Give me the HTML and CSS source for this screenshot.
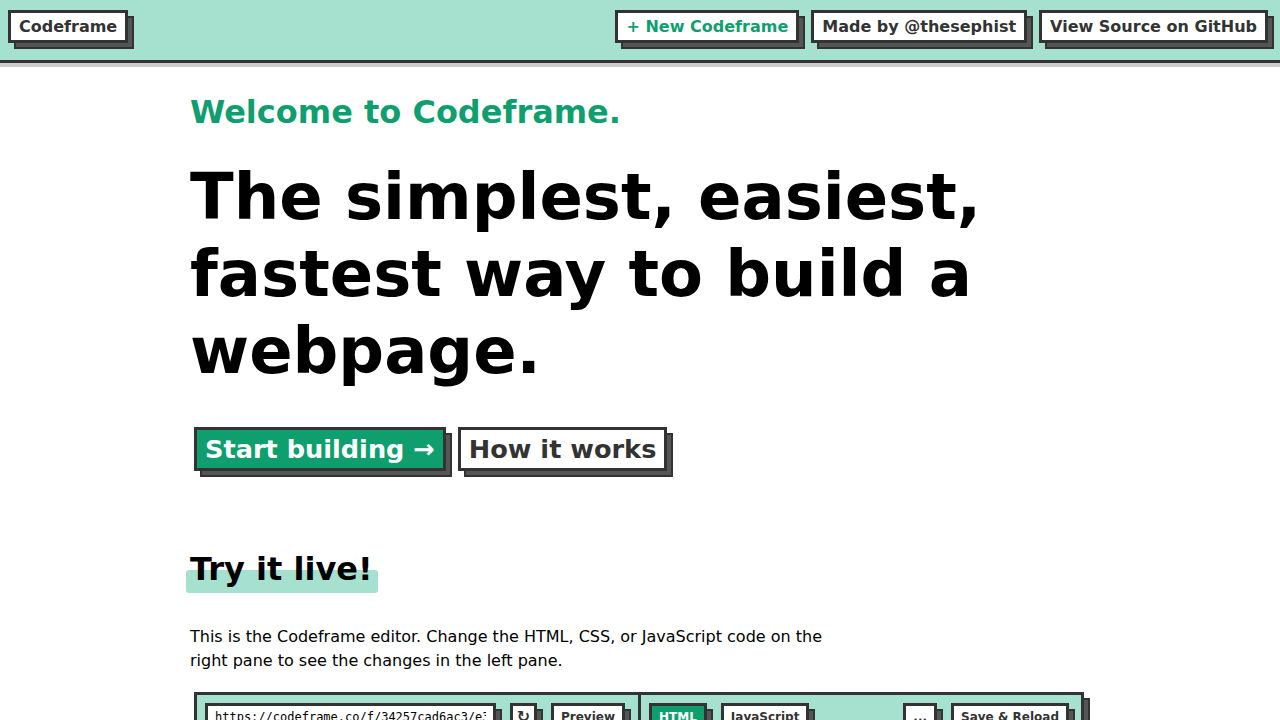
FILE: index.html
```html
<!DOCTYPE html>
<html lang="en">
<head>
<meta charset="utf-8">
<title>Codeframe</title>
<link rel="stylesheet" href="styles.css">
</head>
<body>
<header class="topbar">
  <a class="btn" href="#">Codeframe</a>
  <nav class="topnav">
    <a class="btn btn-accent" href="#">+ New Codeframe</a>
    <a class="btn" href="#">Made by @thesephist</a>
    <a class="btn" href="#">View Source on GitHub</a>
  </nav>
</header>
<main class="page">
  <h2 class="welcome">Welcome to Codeframe.</h2>
  <h1 class="headline">The simplest, easiest, fastest way to build a webpage.</h1>
  <div class="actions">
    <a class="btn btn-large btn-primary" href="#">Start building →</a>
    <a class="btn btn-large" href="#">How it works</a>
  </div>
  <h2 class="section-title"><span class="highlight">Try it live!</span></h2>
  <p class="intro">This is the Codeframe editor. Change the HTML, CSS, or JavaScript code on the right pane to see the changes in the left pane.</p>
  <div class="editor">
    <div class="pane pane-preview">
      <div class="toolbar">
        <input class="url" type="text" value="https://codeframe.co/f/34257cad6ac3/e3f1ab" readonly>
        <button class="btn btn-small btn-icon">↻</button>
        <button class="btn btn-small">Preview</button>
      </div>
    </div>
    <div class="pane pane-code">
      <div class="toolbar">
        <button class="btn btn-small btn-primary">HTML</button>
        <button class="btn btn-small">JavaScript</button>
        <button class="btn btn-small btn-more">...</button>
        <button class="btn btn-small">Save &amp; Reload</button>
      </div>
    </div>
  </div>
</main>
</body>
</html>
```

FILE: styles.css
```css
* {
  box-sizing: border-box;
}

html, body {
  margin: 0;
  padding: 0;
  background: #fff;
  font-family: "DejaVu Sans", "Noto Sans", sans-serif;
  color: #000;
  overflow: hidden;
}

.btn {
  display: inline-block;
  font-family: inherit;
  font-size: 16px;
  font-weight: bold;
  line-height: normal;
  color: #333;
  background: #fff;
  border: 3px solid #333;
  border-radius: 0;
  padding: 4px 8px;
  text-decoration: none;
  white-space: nowrap;
  cursor: pointer;
  box-shadow: 6px 6px 0 -2px #555, 6px 6px 0 0 #333;
}

.btn-accent {
  color: #0f9f6e;
}

.btn-primary {
  background: #0f9f6e;
  color: #fff;
}

.topbar {
  display: flex;
  justify-content: space-between;
  align-items: flex-start;
  background: #a6e0cf;
  padding: 10px 12px 17px 8px;
  border-bottom: 3px solid #333;
  box-shadow: 0 4px 0 #cccccc;
}

.topnav {
  display: flex;
  gap: 12px;
}

.page {
  width: 900px;
  margin: 0 auto;
  padding-top: 30px;
}

.welcome {
  margin: 0;
  font-size: 32px;
  line-height: 1.2;
  color: #0f9f6e;
  font-weight: bold;
}

.headline {
  margin: 28px 0 0;
  font-size: 64px;
  line-height: 1.2;
  font-weight: bold;
}

.actions {
  display: flex;
  gap: 12px;
  margin-top: 37px;
  padding-left: 4px;
}

.btn-large {
  font-size: 25.6px;
}

.section-title {
  margin: 79px 0 0;
  font-size: 32px;
  line-height: 1.2;
  font-weight: bold;
}

.highlight {
  position: relative;
  display: inline-block;
  z-index: 0;
}

.highlight::after {
  content: "";
  position: absolute;
  left: -4px;
  right: -5px;
  top: 20px;
  bottom: -5px;
  background: #a6e0cf;
  border-radius: 3px;
  z-index: -1;
}

.intro {
  margin: 37px 0 0;
  max-width: 640px;
  font-size: 16px;
  line-height: 24px;
}

.editor {
  margin: 19px 6px 0 4px;
  display: grid;
  grid-template-columns: 441px 1fr;
  background: #a6e0cf;
  border: 3px solid #333;
  box-shadow: 6px 6px 0 -2px #555, 6px 6px 0 0 #333;
  height: 400px;
}

.pane-code {
  border-left: 3px solid #333;
}

.toolbar {
  display: flex;
  align-items: flex-start;
  gap: 14px;
  padding: 8px;
}

.pane-code .toolbar {
  padding-right: 12px;
}

.url {
  width: 291px;
  font-family: "DejaVu Sans Mono", monospace;
  font-size: 12px;
  line-height: normal;
  color: #000;
  background: #fff;
  border: 3px solid #333;
  border-radius: 0;
  padding: 4px 7px;
  outline: none;
  box-shadow: 6px 6px 0 -2px #555, 6px 6px 0 0 #333;
}

.btn-small {
  font-size: 12px;
  padding: 4px 7px;
}

.btn-icon {
  font-size: 16px;
  line-height: 1;
  padding: 3px 2px;
  width: 27px;
}

.btn-more {
  margin-left: auto;
}
```
